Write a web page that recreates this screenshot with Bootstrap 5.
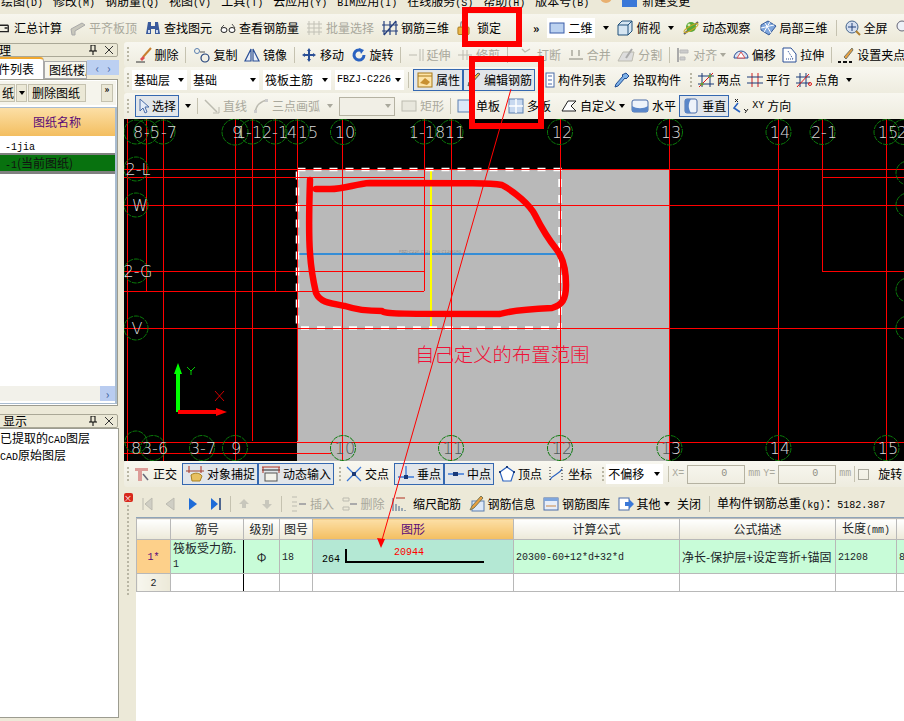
<!DOCTYPE html>
<html lang="zh">
<head>
  <meta charset="UTF-8" />
  <title>钢筋算量</title>
  <link href="https://cdn.jsdelivr.net/npm/bootstrap@5.3.3/dist/css/bootstrap.min.css" rel="stylesheet">
  <style>
    html, body { height: 721px; margin: 0; overflow: hidden; }
    body { position: relative; background: #ece9d8; color: #000; font: 12px/16px "Noto Sans CJK SC", sans-serif; }
    .mono { font-family: "Liberation Mono", monospace; font-size: 10px; }
    svg { flex: none; display: block; }

    /* menu + toolbars */
    .menu-row { height: 14px; overflow: hidden; line-height: 1px; gap: 10px; padding-left: 1px; background: #ece9d8; white-space: nowrap; }
    .menu-row svg { margin-top: -7px; }
    .menu-near { margin-left: -5px; }
    .menu-icon-near { margin-left: -2px; }
    .tool-row { height: 28px; gap: 8px; background: linear-gradient(#f7f6ee, #ece9d8); white-space: nowrap; overflow: hidden; }
    .tbar { background: linear-gradient(#f8f7f0, #eeecdf); white-space: nowrap; overflow: hidden; margin-left: 4px; border-radius: 3px 0 0 3px; }
    .tbar-a { height: 25px; gap: 6.5px; }
    .tbar-b { height: 26px; gap: 6px; }
    .tbar-c { height: 26px; gap: 6px; }
    .tbar-s { height: 26px; gap: 5px; }
    .tool { display: flex; align-items: center; gap: 3px; flex: none; }
    .off { color: #a9a89c; }
    .grip { width: 2px; height: 15px; margin-left: 3px; flex: none; background: repeating-linear-gradient(#b9b6a4 0 2px, transparent 2px 4px); }
    .grip-flush { margin-left: 0; }
    .sep { width: 1px; height: 16px; background: #c5c2b0; flex: none; }
    .sep-tight { margin: 0 -2px; }
    .tri { width: 0; height: 0; flex: none; border: 3px solid transparent; border-top: 4px solid #000; border-bottom: 0; }
    .tri-off { border-top-color: #a9a89c; }
    .active-btn { height: 22px; padding: 0 2px 0 3px; border: 1px solid #3568b0; background: #e2e6ea; gap: 3px; }
    .combo { background: #fff; height: 20px; align-items: center; justify-content: space-between; display: flex; padding: 0 3px 0 2px; flex: none; overflow: hidden; }
    .combo-a { width: 55px; }
    .combo-b { width: 68px; }
    .combo-c { width: 69px; }
    .combo-off { width: 56px; height: 19px; border: 1px solid #b5b2a2; background: #f1efe6; }
    .combo-off2 { width: 57px; }
    .combos { gap: 4px; margin-left: -3px; }
    .offset-group { gap: 3px; }
    .num-box { width: 58px; height: 19px; border: 1px solid #b5b2a2; color: #8f8e84; display: flex; align-items: center; justify-content: flex-end; padding-right: 17px; flex: none; }
    .check-off { width: 11px; height: 11px; border: 1px solid #a9a89c; flex: none; margin-right: 6px; }
    .push-r { margin-right: 2px; }
    .push-l { margin-left: 2px; }
    .pull-l { margin-left: -3px; }

    /* left docking panels */
    .side { width: 120px; flex: none; overflow: hidden; height: 679px; }
    .dock-title { height: 14px; margin: 1px 2px 0 -2px; border: 1px solid #aaa897; border-radius: 2px; background: #ebe8d6; line-height: 12px; overflow: hidden; padding: 0 4px 0 0; }
    .tab-strip { height: 22px; white-space: nowrap; overflow: hidden; position: relative; }
    .tab-on { width: 44px; height: 22px; background: #fff; border-top: 2px solid #f0a830; border-right: 1px solid #aaa; border-radius: 0 4px 0 0; padding-top: 2px; text-indent: -2px; overflow: hidden; flex: none; }
    .tab-off { width: 43px; height: 18px; margin-top: 4px; background: #f7f6ee; border: 1px solid #aaa; overflow: hidden; padding-left: 4px; flex: none; }
    .tab-nav { position: absolute; left: 87px; top: 3px; width: 32px; height: 15px; background: #bcd0f2; gap: 8px; justify-content: center; align-items: center; display: flex; color: #4a6ca8; }
    .tab-box { height: 327px; width: 121px; margin-left: -3px; background: #fff; border: 1px solid #9c9c90; padding: 1px 0 0; position: relative; }
    .mini-row { height: 24px; background: #f5f4ec; gap: 1px; padding-top: 3px; overflow: hidden; margin-right: 1px; }
    .mini-btn { height: 18px; background: #ebe8d6; border: 1px solid #c5c2b0; display: flex; align-items: center; flex: none; overflow: hidden; }
    .mini-a { width: 17px; justify-content: flex-end; }
    .mini-b { width: 11px; justify-content: center; }
    .mini-c { width: 58px; padding-left: 3px; }
    .mini-d { width: 12px; margin-left: 14px; font-size: 9px; line-height: 10px; font-weight: 700; justify-content: center; align-items: flex-start; }
    .sheet { border: 1px solid #a9bcd0; border-right-width: 2px; height: 297px; margin: 2px 0 0; position: relative; }
    .sheet-head { height: 28px; background: linear-gradient(#fcdfa6, #f3be60); color: #5a0a78; text-align: center; line-height: 28px; }
    .sheet-row { height: 17px; padding-left: 6px; line-height: 17px; }
    .sheet-cur { height: 16px; background: #08720f; color: #111; padding-left: 6px; line-height: 16px; border-top: 2px solid #808080; border-bottom: 3px solid #808080; box-sizing: content-box; }
    .sheet-scroll { position: absolute; left: 0; right: 0; bottom: 2px; height: 15px; background: #f2f1ea; display: flex; justify-content: flex-end; }
    .scroll-btn { width: 15px; height: 15px; background: #b9ccf0; color: #3e5f9c; display: flex; align-items: center; justify-content: center; }
    .layer-box { height: 290px; background: #fff; width: 122px; margin-left: -3px; border: 1px solid #9c9c90; padding: 2px 0 0 2px; white-space: nowrap; overflow: hidden; line-height: 14px; }

    .work { flex: 1; min-width: 0; }
    .cad { display: block; margin-left: 4px; background: #000; }
    .cad text { font-family: "DejaVu Sans", sans-serif; font-size: 16px; font-weight: 300; fill: #dcdcdc; text-anchor: middle; }
    .cad .dim { fill: #4d5a5a; }
    .cad .note { font-family: "Noto Sans CJK SC", sans-serif; font-size: 19.4px; fill: #f01038; text-anchor: start; }
    .cad .tiny { font-size: 4px; fill: #666; }

    /* rebar panel */
    .rebar-panel { height: 234px; }
    .rebar-strip { width: 16px; flex: none; padding-top: 6px; align-items: center; gap: 3px; }
    .close-red { width: 9px; height: 9px; background: #d8281c; color: #fff; border-radius: 2px; font-size: 8px; line-height: 9px; text-align: center; }
    .strip-dots { width: 2px; height: 90px; background: repeating-linear-gradient(#b9b6a4 0 2px, transparent 2px 4px); }
    .rebar-main { flex: 1; min-width: 0; background: #fff; }
    .rebar-tools { height: 31px; padding: 4px 0 0 5px; background: #ece9d8; gap: 7.5px; white-space: nowrap; overflow: hidden; border-bottom: 1px solid #8ea4b8; }
    .nav-group { gap: 11px; }
    .rebar-table { table-layout: fixed; width: 800px; margin: 0; border-color: #b8b8b8; font-size: 12px; --bs-table-bg: transparent; }
    .rebar-table th, .rebar-table td { padding: 0 2px; border: 1px solid #b8b8b8; height: 18px; vertical-align: middle; font-weight: 400; line-height: 14px; white-space: nowrap; overflow: hidden; }
    .rebar-table th { background: linear-gradient(#fff, #ece9d8); text-align: center; height: 21px; }
    .rebar-table th.col-on { background: linear-gradient(#fcdfa6, #f3be60); color: #5a0a78; }
    .rebar-table .row-a td { background: #c8fcd8; height: 34px; }
    .rebar-table .row-a td.shape { background: #b4e8d4; padding: 0; }
    .rebar-table td.rownum { text-align: center; background: linear-gradient(90deg, #f7f6ee, #ece9d8); }
    .rebar-table .row-a td.rownum { background: #fdd08a; color: #5a0a78; }
    .rebar-table td.wrap { white-space: normal; }
    .rebar-table td.rule-right { border-right: 1px solid #000; }
    .c0 { width: 34px; } .c1 { width: 73px; } .c2 { width: 36px; } .c3 { width: 33px; } .c4 { width: 201px; }
    .c5 { width: 166px; } .c6 { width: 156px; } .c7 { width: 61px; } .c8 { width: 40px; }

    /* marks drawn on top of the screenshot */
    .ink { position: absolute; left: 0; top: 0; pointer-events: none; }
  </style>
</head>
<body>

<!-- icon sprite -->
<svg width="0" height="0" class="position-absolute">
  <defs>
    <symbol id="i-sum" viewBox="0 0 12 16"><path d="M0 5h9M9 5v7H0M5 8h3" fill="none" stroke="#222" stroke-width="1.5"/></symbol>
    <symbol id="i-level" viewBox="0 0 16 16"><path d="M1 9l11-6 3 2-10 6v4H2z" fill="#c8c7bc" stroke="#aaa" /></symbol>
    <symbol id="i-binoc" viewBox="0 0 16 16"><path d="M3 2h3v4h4V2h3l2 12h-5V9H6v5H1z" fill="#3a5a9c"/><path d="M3 10h2v3H3zM11 10h2v3h-2z" fill="#cfdcf2"/></symbol>
    <symbol id="i-glass" viewBox="0 0 16 16"><path d="M1 8l3-3M15 8l-3-4" stroke="#555" fill="none"/><ellipse cx="4" cy="10" rx="3" ry="2.5" fill="#fff" stroke="#222"/><ellipse cx="12" cy="10" rx="3" ry="2.5" fill="#fff" stroke="#222"/></symbol>
    <symbol id="i-batch" viewBox="0 0 16 16"><path d="M2 1v14M7 1v14M12 1v14M0 4h15M0 8h15M0 12h15" stroke="#c2c1b6" fill="none"/></symbol>
    <symbol id="i-r3d" viewBox="0 0 16 16"><path d="M2 1v14M8 1v14M14 1v14M0 5h16M0 11h16M2 15L14 1" stroke="#26407e" fill="none" stroke-width="1.2"/></symbol>
    <symbol id="i-lock" viewBox="0 0 14 16"><path d="M4 7V4a3 3 0 0 1 6 0v3" fill="none" stroke="#999" stroke-width="1.5"/><rect x="1" y="7" width="12" height="8" rx="1" fill="#eab64a" stroke="#a87818"/></symbol>
    <symbol id="i-2d" viewBox="0 0 16 16"><rect x="1" y="3" width="14" height="10" fill="#bcd2f0" stroke="#3a5ca8"/></symbol>
    <symbol id="i-cube" viewBox="0 0 16 16"><path d="M1 5l4-4h10v10l-4 4H1z" fill="#d6e6f2" stroke="#20507a"/><path d="M1 5h10v10M11 5l4-4" fill="none" stroke="#20507a"/></symbol>
    <symbol id="i-orbit" viewBox="0 0 18 16"><path d="M2 14L16 2" stroke="#666" stroke-width="2"/><circle cx="9" cy="7" r="5" fill="#58a838"/><circle cx="7" cy="5" r="1.5" fill="#d4f0b8"/><ellipse cx="9" cy="8" rx="8" ry="2" fill="none" stroke="#c8a820" transform="rotate(-30 9 8)"/></symbol>
    <symbol id="i-local" viewBox="0 0 18 16"><path d="M2 5l7-4 8 5-7 9-8-5z" fill="#7fa6dc" stroke="#345a9a"/><path d="M6 3l6 10M11 2l-6 10M2 8l13-3" stroke="#fff" fill="none"/></symbol>
    <symbol id="i-full" viewBox="0 0 16 16"><circle cx="7" cy="7" r="6" fill="#d4dff0" stroke="#44648c"/><path d="M11 11l4 4" stroke="#b08030" stroke-width="2"/><path d="M7 3v8M3 7h8" stroke="#20407a"/></symbol>
    <symbol id="i-zoom" viewBox="0 0 16 16"><circle cx="6" cy="6" r="5" fill="#eef2f8" stroke="#667"/><path d="M10 10l5 5" stroke="#b08030" stroke-width="2"/></symbol>

    <symbol id="i-brush" viewBox="0 0 16 16"><path d="M15 1L7 10" stroke="#c88030" stroke-width="2"/><path d="M7 9l-3 3 2 2 3-3z" fill="#e05050"/><path d="M0 15h9" stroke="#333"/></symbol>
    <symbol id="i-copy" viewBox="0 0 18 16"><circle cx="4" cy="4" r="2.5" fill="none" stroke="#5a7fb0"/><circle cx="12" cy="11" r="4" fill="none" stroke="#20407a" stroke-width="1.2"/><path d="M7 5h5" stroke="#555"/></symbol>
    <symbol id="i-mirror" viewBox="0 0 16 16"><path d="M7 2L1 14h6zM9 2l6 12H9z" fill="#e8eef8" stroke="#2a4f96" stroke-width="1.2"/></symbol>
    <symbol id="i-move" viewBox="0 0 16 16"><path d="M8 1l2 3H9v3h3V6l3 2-3 2V9H9v3h1l-2 3-2-3h1V9H4v1L1 8l3-2v1h3V4H6z" fill="#2a4f96"/></symbol>
    <symbol id="i-rot" viewBox="0 0 16 16"><path d="M13 8a5 5 0 1 1-3-4.6" fill="none" stroke="#2a62c0" stroke-width="3"/><path d="M8 1l5 2-3 4z" fill="#2a62c0"/></symbol>
    <symbol id="i-extend" viewBox="0 0 16 16"><path d="M1 8h8M12 2v12M15 2v12" stroke="#bcbbb0" fill="none"/></symbol>
    <symbol id="i-trim" viewBox="0 0 16 16"><path d="M1 8h14M6 3v10M10 3v10" stroke="#bcbbb0" fill="none"/></symbol>
    <symbol id="i-break" viewBox="0 0 20 16"><path d="M1 12h7M12 12h7M8 2l3 3 5-3" stroke="#bcbbb0" fill="none" stroke-width="1.3"/></symbol>
    <symbol id="i-merge" viewBox="0 0 16 16"><path d="M1 12h14M4 3v6M11 3v6" stroke="#bcbbb0" fill="none" stroke-width="2"/></symbol>
    <symbol id="i-split" viewBox="0 0 18 16"><path d="M1 14h14l2-9H6z" fill="#ddd" stroke="#bcbbb0"/><path d="M9 11l6-9" stroke="#aaa" stroke-width="2"/></symbol>
    <symbol id="i-align" viewBox="0 0 14 16"><path d="M2 1v14" stroke="#aaa" stroke-width="2"/><path d="M4 3h8v3H4zM4 10h5v3H4z" fill="#ccc" stroke="#bbb"/></symbol>
    <symbol id="i-offset" viewBox="0 0 16 16"><path d="M1 11a7 7 0 1 1 14 0z" fill="#d8e4f4" stroke="#2a4f96"/><path d="M4 11l4-6 4 6z" fill="#fff" stroke="#d85050"/></symbol>
    <symbol id="i-stretch" viewBox="0 0 15 16"><path d="M1 1h8l5 6v8H1z" fill="#fff" stroke="#2a4f96"/><path d="M6 4l5 8M4 12h8" stroke="#2a4f96" stroke-dasharray="1 1" fill="none"/></symbol>
    <symbol id="i-grips" viewBox="0 0 16 16"><path d="M14 1l-8 9 2 2 7-9z" fill="#e8a040" stroke="#776"/><path d="M0 15h3M5 15h4M11 15h3" stroke="#111" stroke-width="2"/></symbol>

    <symbol id="i-prop" viewBox="0 0 16 16"><rect x="1" y="1" width="14" height="14" fill="#fde4a8" stroke="#a87818"/><path d="M3 11l5-5 5 4-3 3z" fill="#c89030"/><path d="M1 4h14" stroke="#a87818"/></symbol>
    <symbol id="i-pencil" viewBox="0 0 14 16"><path d="M13 2l-9 10-3 2 1-4 9-9z" fill="#f0c040" stroke="#555"/></symbol>
    <symbol id="i-list" viewBox="0 0 14 16"><rect x="5" y="1" width="8" height="14" fill="#fff" stroke="#4a6ca8"/><path d="M1 3h2M1 7h2M1 11h2M7 4h4M7 8h4M7 12h4" stroke="#4a6ca8"/></symbol>
    <symbol id="i-drop" viewBox="0 0 16 16"><path d="M12 1l3 3-3 3-1-1-7 8-3 1 1-3 7-8-1-1z" fill="#7fb2e8" stroke="#1f4c92"/></symbol>
    <symbol id="i-2p" viewBox="0 0 16 16"><path d="M4 1v14M12 1v14M0 4h16M0 12h16" stroke="#1a3a78" fill="none"/><path d="M1 15L15 1" stroke="#e01818"/><circle cx="4" cy="12" r="1.6" fill="#6a9a30"/><circle cx="12" cy="4" r="1.6" fill="#6a9a30"/></symbol>
    <symbol id="i-par" viewBox="0 0 16 16"><path d="M5 1v14M11 1v14" stroke="#d02020"/><path d="M0 5h16M0 11h16" stroke="#1a3a78"/></symbol>
    <symbol id="i-ang" viewBox="0 0 16 16"><path d="M4 1v14M10 1v14M0 5h14M0 11h14" stroke="#1a3a78" fill="none"/><path d="M1 15L13 2" stroke="#e01818"/><circle cx="14" cy="12" r="1.5" fill="none" stroke="#e01818"/></symbol>

    <symbol id="i-arrow" viewBox="0 0 10 16"><path d="M1 1v12l3-3 2 5 2-1-2-5h4z" fill="#e4ecf8" stroke="#4a6ca8"/></symbol>
    <symbol id="i-line" viewBox="0 0 16 16"><path d="M1 2l12 12" stroke="#bcbbb0" stroke-width="1.5"/><path d="M9 15h6V9" fill="none" stroke="#bcbbb0"/></symbol>
    <symbol id="i-arc" viewBox="0 0 16 16"><path d="M2 15C3 7 7 3 15 2" fill="none" stroke="#bcbbb0" stroke-width="1.5"/><rect x="1" y="12" width="3" height="3" fill="#ccc"/><rect x="12" y="1" width="3" height="3" fill="#ccc"/></symbol>
    <symbol id="i-rect" viewBox="0 0 16 16"><rect x="1" y="3" width="14" height="10" fill="#e8e7dd" stroke="#bcbbb0"/></symbol>
    <symbol id="i-plate" viewBox="0 0 16 16"><rect x="1" y="2" width="14" height="12" fill="#dce8f8" stroke="#5a7fb0"/></symbol>
    <symbol id="i-multi" viewBox="0 0 16 16"><rect x="1" y="1" width="14" height="14" fill="#c8d9f0" stroke="#5a7fb0"/><path d="M8 1v14M1 8h14" stroke="#fff" stroke-width="1.5"/></symbol>
    <symbol id="i-custom" viewBox="0 0 16 16"><path d="M1 13L7 3h8L10 8l5 5z" fill="#fff" stroke="#222"/></symbol>
    <symbol id="i-hor" viewBox="0 0 18 16"><rect x="1" y="2" width="16" height="12" rx="2" fill="#eef3fa" stroke="#4a6ca8"/><path d="M1 8c5 3 11 3 16 0v6H1z" fill="#5a86c8"/></symbol>
    <symbol id="i-ver" viewBox="0 0 16 16"><rect x="2" y="1" width="12" height="14" rx="2" fill="#eef3fa" stroke="#4a6ca8"/><path d="M8 1C5 6 5 10 8 15H2V1z" fill="#5a86c8"/></symbol>
    <symbol id="i-xy" viewBox="0 0 17 16"><path d="M6 5l-4 5 6 4" fill="none" stroke="#2a62c0" stroke-width="1.6"/><path d="M3 1l3 3M6 1L3 4M12 11l2 2M16 11l-3 4" stroke="#222" fill="none"/></symbol>

    <symbol id="i-ortho" viewBox="0 0 16 16"><path d="M1 2h13v3H8v10H4V5H1z" fill="#dc9c98"/><path d="M9 8l5 6" stroke="#667" stroke-width="1.5"/></symbol>
    <symbol id="i-snap" viewBox="0 0 18 16"><path d="M3 0v7M15 0v7" stroke="#b03020"/><path d="M0 5h18" stroke="#a04030"/><path d="M5 9c4-3 9-2 11 1l-2 5H6z" fill="#e8c060" stroke="#a88020"/></symbol>
    <symbol id="i-dyn" viewBox="0 0 18 16"><path d="M0 1h18" stroke="#b03020"/><path d="M0 4h18" stroke="#222"/><path d="M1 1v6M17 1v6" stroke="#b03020"/><rect x="3" y="7" width="12" height="8" fill="#f3f2ea" stroke="#555"/></symbol>
    <symbol id="i-cross" viewBox="0 0 16 16"><path d="M1 1l14 14M15 1L1 15" stroke="#3a78d8" stroke-width="1.3"/><rect x="6" y="6" width="4" height="4" fill="#1a3a78"/></symbol>
    <symbol id="i-perp" viewBox="0 0 16 16"><path d="M8 0v11M0 11h16" stroke="#3a78d8" stroke-width="1.3"/><rect x="6" y="9" width="4" height="4" fill="#1a3a78"/></symbol>
    <symbol id="i-mid" viewBox="0 0 16 16"><path d="M0 8h16" stroke="#3a78d8" stroke-width="1.3"/><rect x="5" y="6" width="5" height="4" fill="#1a3a78"/></symbol>
    <symbol id="i-vertex" viewBox="0 0 16 16"><path d="M8 1l7 5-3 9H4L1 6z" fill="#fff" stroke="#2a62c0" stroke-width="1.2"/><rect x="7" y="0" width="2" height="2" fill="#1a3a78"/><rect x="0" y="5" width="2" height="2" fill="#1a3a78"/><rect x="14" y="5" width="2" height="2" fill="#1a3a78"/></symbol>
    <symbol id="i-coord" viewBox="0 0 18 16"><path d="M3 14C6 8 12 9 15 3" fill="none" stroke="#2a62c0" stroke-width="1.3"/><path d="M3 1v14M15 1v14" stroke="#222" stroke-dasharray="1 2"/></symbol>

    <symbol id="i-first" viewBox="0 0 12 16"><path d="M2 2v12M11 2L4 8l7 6z" fill="#cfcec4" stroke="#bcbbb0"/></symbol>
    <symbol id="i-prev" viewBox="0 0 12 16"><path d="M10 2L2 8l8 6z" fill="#cfcec4" stroke="#bcbbb0"/></symbol>
    <symbol id="i-next" viewBox="0 0 12 16"><path d="M2 2l8 6-8 6z" fill="#1e6cd8"/></symbol>
    <symbol id="i-last" viewBox="0 0 12 16"><path d="M1 2l7 6-7 6z" fill="#1e6cd8"/><path d="M10 2v12" stroke="#1a3a78" stroke-width="1.5"/></symbol>
    <symbol id="i-up" viewBox="0 0 12 16"><path d="M6 3l5 5H8v4H4V8H1z" fill="#c8c7bc"/></symbol>
    <symbol id="i-down" viewBox="0 0 12 16"><path d="M6 13l5-5H8V4H4v4H1z" fill="#c8c7bc"/></symbol>
    <symbol id="i-ins" viewBox="0 0 16 16"><path d="M1 1h5M1 15h5M1 6h5M1 10h5" stroke="#bcbbb0"/><path d="M8 8h7" stroke="#aaa" stroke-width="2"/></symbol>
    <symbol id="i-del" viewBox="0 0 16 16"><path d="M1 2h6v3H1zM1 11h6v3H1z" fill="none" stroke="#bcbbb0"/><path d="M8 8h7" stroke="#aaa" stroke-width="2"/></symbol>
    <symbol id="i-scale" viewBox="0 0 14 16"><path d="M1 15V2M4 15V8M7 15v-5M10 15v-3M13 15v-1" stroke="#44648c"/><path d="M4 2h9" stroke="#b03020"/></symbol>
    <symbol id="i-info" viewBox="0 0 16 16"><rect x="3" y="5" width="12" height="10" fill="#dce8f8" stroke="#5a7fb0"/><path d="M12 0L3 10l-2 4 4-2 9-10z" fill="#e8a040" stroke="#775"/></symbol>
    <symbol id="i-lib" viewBox="0 0 16 16"><rect x="1" y="2" width="14" height="12" fill="#e8eef8" stroke="#4a6ca8"/><path d="M1 2h14v3H1z" fill="#7fa6dc"/><path d="M3 10h10" stroke="#c84"/></symbol>
    <symbol id="i-other" viewBox="0 0 16 16"><rect x="1" y="2" width="10" height="12" fill="#fff" stroke="#4a6ca8"/><path d="M7 6h4V3l5 5-5 5v-3H7z" fill="#3a78d8"/></symbol>
  </defs>
</svg>

<!-- menu -->
<div class="menu-row d-flex">
  <span>绘图<span class="mono">(D)</span></span><span>修改<span class="mono">(M)</span></span><span>钢筋量<span class="mono">(Q)</span></span><span>视图<span class="mono">(V)</span></span><span>工具<span class="mono">(T)</span></span><span>云应用<span class="mono">(Y)</span></span><span><span class="mono">BIM</span>应用<span class="mono">(I)</span></span><span>在线服务<span class="mono">(S)</span></span><span>帮助<span class="mono">(H)</span></span><span>版本号<span class="mono">(B)</span></span>
  <svg width="15" height="14" viewBox="0 0 15 14"><circle cx="7" cy="4" r="6" fill="#e8b070"/><path d="M1 0h13" stroke="#d8a820" stroke-width="3"/></svg>
  <svg class="menu-icon-near" width="15" height="14" viewBox="0 0 15 14"><rect width="15" height="14" fill="#3a78d8"/></svg>
  <span class="menu-near">新建变更</span>
</div>

<!-- main toolbar -->
<div class="tool-row d-flex align-items-center">
  <span class="tool"><svg width="11" height="16"><use href="#i-sum"/></svg>汇总计算</span>
  <span class="tool off"><svg width="16" height="16"><use href="#i-level"/></svg>平齐板顶</span>
  <span class="tool"><svg width="16" height="16"><use href="#i-binoc"/></svg>查找图元</span>
  <span class="tool"><svg width="16" height="16"><use href="#i-glass"/></svg>查看钢筋量</span>
  <span class="tool off"><svg width="16" height="16"><use href="#i-batch"/></svg>批量选择</span>
  <span class="tool"><svg width="16" height="16"><use href="#i-r3d"/></svg>钢筋三维</span>
  <span class="tool"><svg width="13" height="16"><use href="#i-lock"/></svg><span class="ms-1">锁定</span></span>
  <span class="fw-bold ms-4">»</span>
  <span class="combo"><span class="tool"><svg width="16" height="16"><use href="#i-2d"/></svg>二维</span></span><span class="tri"></span>
  <span class="tool"><svg width="16" height="16"><use href="#i-cube"/></svg>俯视<span class="tri ms-1"></span></span>
  <span class="tool"><svg width="18" height="16"><use href="#i-orbit"/></svg>动态观察</span>
  <span class="tool"><svg width="18" height="16"><use href="#i-local"/></svg>局部三维</span>
  <span class="sep"></span>
  <span class="tool"><svg width="16" height="16"><use href="#i-full"/></svg>全屏</span>
  <span class="tool"><svg width="16" height="16"><use href="#i-zoom"/></svg></span>
</div>

<div class="d-flex">
  <!-- left docks -->
  <div class="side">
    <div class="dock-title d-flex justify-content-between">
      <span>理</span>
      <span class="d-flex gap-2 align-items-center"><svg width="8" height="10" viewBox="0 0 8 10"><path d="M2 0v6M6 0v6M0 6h8M4 6v4M2 0h4" stroke="#000" fill="none"/></svg><svg width="8" height="8" viewBox="0 0 8 8"><path d="M0 0l8 8M8 0L0 8" stroke="#333"/></svg></span>
    </div>
    <div class="tab-strip d-flex">
      <div class="tab-on">件列表</div>
      <div class="tab-off">图纸楼层</div>
      <div class="tab-nav"><span>‹</span><span>›</span></div>
    </div>
    <div class="tab-box">
      <div class="mini-row d-flex">
        <span class="mini-btn mini-a">纸</span>
        <span class="mini-btn mini-b"><span class="tri"></span></span>
        <span class="mini-btn mini-c">删除图纸</span>
        <span class="mini-btn mini-d">»</span>
      </div>
      <div class="sheet">
        <div class="sheet-head">图纸名称</div>
        <div class="sheet-row"><span class="mono">-1jia</span></div>
        <div class="sheet-cur"><span class="mono">-1</span>(当前图纸)</div>
        <div class="sheet-scroll"><span class="scroll-btn">›</span></div>
      </div>
    </div>
    <div class="dock-title d-flex justify-content-between mt-2">
      <span class="ps-1">显示</span>
      <span class="d-flex gap-2 align-items-center"><svg width="8" height="10" viewBox="0 0 8 10"><path d="M2 0v6M6 0v6M0 6h8M4 6v4M2 0h4" stroke="#000" fill="none"/></svg><svg width="8" height="8" viewBox="0 0 8 8"><path d="M0 0l8 8M8 0L0 8" stroke="#333"/></svg></span>
    </div>
    <div class="layer-box">
      <div>已提取的<span class="mono">CAD</span>图层</div>
      <div><span class="mono">CAD</span>原始图层</div>
    </div>
  </div>

  <!-- work area -->
  <div class="work">
    <div class="tbar tbar-a d-flex align-items-center">
      <span class="grip"></span>
      <span class="tool"><svg width="16" height="16"><use href="#i-brush"/></svg>删除</span><span class="sep"></span>
      <span class="tool"><svg width="18" height="16"><use href="#i-copy"/></svg>复制</span>
      <span class="tool"><svg width="16" height="16"><use href="#i-mirror"/></svg>镜像</span><span class="sep"></span>
      <span class="tool"><svg width="16" height="16"><use href="#i-move"/></svg>移动</span>
      <span class="tool"><svg width="16" height="16"><use href="#i-rot"/></svg>旋转</span><span class="sep"></span>
      <span class="tool off"><svg width="16" height="16"><use href="#i-extend"/></svg>延伸</span>
      <span class="tool off"><svg width="16" height="16"><use href="#i-trim"/></svg>修剪</span><span class="sep"></span>
      <span class="tool off"><svg width="20" height="16"><use href="#i-break"/></svg>打断</span>
      <span class="tool off"><svg width="16" height="16"><use href="#i-merge"/></svg>合并</span>
      <span class="tool off"><svg width="18" height="16"><use href="#i-split"/></svg>分割</span><span class="sep"></span>
      <span class="tool off"><svg width="14" height="16"><use href="#i-align"/></svg>对齐<span class="tri tri-off"></span></span>
      <span class="tool"><svg width="16" height="16"><use href="#i-offset"/></svg>偏移</span>
      <span class="tool"><svg width="15" height="16"><use href="#i-stretch"/></svg>拉伸</span><span class="sep"></span>
      <span class="tool"><svg width="16" height="16"><use href="#i-grips"/></svg>设置夹点</span>
    </div>

    <div class="tbar tbar-b d-flex align-items-center">
      <span class="grip"></span>
      <span class="d-flex combos">
        <span class="combo combo-a">基础层<span class="tri"></span></span>
        <span class="combo combo-b">基础<span class="tri"></span></span>
        <span class="combo combo-b">筏板主筋<span class="tri"></span></span>
        <span class="combo combo-c"><span class="mono">FBZJ-C226</span><span class="tri"></span></span>
      </span>
      <span class="sep sep-tight"></span>
      <span class="d-flex">
        <span class="tool active-btn"><svg width="16" height="16"><use href="#i-prop"/></svg>属性</span>
        <span class="tool active-btn"><svg width="14" height="16"><use href="#i-pencil"/></svg>编辑钢筋</span>
      </span>
      <span class="tool"><svg width="14" height="16"><use href="#i-list"/></svg>构件列表</span>
      <span class="tool push-l"><svg width="16" height="16"><use href="#i-drop"/></svg>拾取构件</span>
      <span class="grip"></span>
      <span class="tool"><svg width="16" height="16"><use href="#i-2p"/></svg>两点</span>
      <span class="tool"><svg width="16" height="16"><use href="#i-par"/></svg>平行</span>
      <span class="tool"><svg width="16" height="16"><use href="#i-ang"/></svg>点角<span class="tri ms-1"></span></span>
    </div>

    <div class="tbar tbar-c d-flex align-items-center">
      <span class="grip"></span>
      <span class="tool active-btn"><svg width="10" height="16"><use href="#i-arrow"/></svg>选择</span><span class="tri"></span><span class="sep"></span>
      <span class="tool off"><svg width="16" height="16"><use href="#i-line"/></svg>直线</span>
      <span class="tool off"><svg width="16" height="16"><use href="#i-arc"/></svg>三点画弧<span class="tri tri-off ms-1"></span></span>
      <span class="combo combo-off justify-content-end"><span class="tri tri-off"></span></span>
      <span class="tool off"><svg width="16" height="16"><use href="#i-rect"/></svg>矩形</span><span class="sep"></span>
      <span class="tool"><svg width="16" height="16"><use href="#i-plate"/></svg>单板</span>
      <span class="tool push-l"><svg width="16" height="16"><use href="#i-multi"/></svg>多板</span>
      <span class="tool ms-1"><svg width="16" height="16"><use href="#i-custom"/></svg>自定义<span class="tri"></span></span>
      <span class="tool"><svg width="18" height="16"><use href="#i-hor"/></svg>水平</span>
      <span class="tool active-btn pull-l"><svg width="16" height="16"><use href="#i-ver"/></svg>垂直</span>
      <span class="tool pull-l"><svg width="17" height="16"><use href="#i-xy"/></svg><span class="mono">XY</span>方向</span>
    </div>

    <!-- drawing canvas -->
    <svg class="cad" width="780" height="342" viewBox="124 119 780 342">
      <rect x="297" y="169" width="372" height="292" fill="#b9b9b9"/>
      <path d="M297 254H560" stroke="#0a7fe0" stroke-width="1.6"/>
      <text class="tiny" x="430" y="253">FBZJ-C226 C12@180 C12@180</text>
      <path d="M431 169V328" stroke="#ff0" stroke-width="2"/>
      <path d="M297.5 169.5H560V328H297.5Z" fill="none" stroke="#fff" stroke-width="3.5" stroke-dasharray="8 8"/>
      <g stroke="#f00" stroke-width="1" fill="none" shape-rendering="crispEdges">
        <path d="M127 119V461M163 119V461M235 119V461M342.5 119V461M451 119V461M560 119V461M669.5 119V461M778.5 119V461M886.5 119V461"/>
        <path d="M146 119V292M252 119V441M275 119V291M297 119V441M424 119V291M822.5 119V271"/>
        <path d="M124 169H904M124 205H904M124 328H904M124 442H904"/>
        <path d="M124 177H424M822 177H904M124 271H424M822 271H904M124 291H424M124 453H331"/>
      </g>
      <g fill="none" stroke="#0a7a0a" stroke-width="1" stroke-dasharray="5 1">
        <circle cx="136" cy="132" r="12"/><circle cx="146" cy="132" r="12"/><circle cx="163" cy="132" r="12"/>
        <circle cx="235" cy="132" r="13"/><circle cx="252" cy="132" r="12"/><circle cx="275" cy="132" r="12"/><circle cx="297" cy="132" r="12"/>
        <circle cx="343" cy="132" r="12.5"/><circle cx="424" cy="132" r="12"/><circle cx="451" cy="132" r="12"/><circle cx="560" cy="132" r="12.5"/>
        <circle cx="669.5" cy="132" r="13"/><circle cx="778.5" cy="132" r="12.5"/><circle cx="822.5" cy="132" r="12.5"/><circle cx="886.5" cy="132" r="12.5"/><circle cx="904" cy="132" r="12.5"/>
        <circle cx="136" cy="169" r="12"/><circle cx="136" cy="205" r="12"/><circle cx="136" cy="271" r="12"/><circle cx="136" cy="328" r="12"/>
        <circle cx="136" cy="442" r="11"/><circle cx="153" cy="448" r="12.5"/><circle cx="202" cy="448" r="12.5"/><circle cx="235" cy="448" r="12.5"/>
        <circle cx="343" cy="448" r="12.5"/><circle cx="451" cy="448" r="12.5"/><circle cx="560" cy="448" r="12.5"/><circle cx="669.5" cy="448" r="12.5"/><circle cx="778.5" cy="448" r="12.5"/><circle cx="886.5" cy="448" r="12.5"/>
        <circle cx="908" cy="173" r="12"/><circle cx="908" cy="205" r="12"/><circle cx="908" cy="290" r="12"/><circle cx="908" cy="328" r="12"/>
      </g>
      <text x="138" y="138">8</text><text x="152" y="138">-5</text><text x="169" y="138">-7</text>
      <text x="237" y="138">9</text><text x="249" y="138">1-1</text><text x="275" y="138">2-1</text><text x="292" y="138">4</text><text x="308" y="138">15</text>
      <text x="345" y="138">10</text><text x="427" y="138">1-18</text><text x="455" y="138">11</text><text x="562" y="138">12</text>
      <text x="671" y="138">13</text><text x="780" y="138">14</text><text x="824" y="138">2-1</text><text x="888" y="138">15</text><text x="902" y="138">2</text>
      <text x="138" y="175">2-L</text><text x="140" y="211">W</text><text x="138" y="277">2-G</text><text x="137" y="334">V</text>
      <text x="136" y="454">8</text><text x="155" y="454">3-6</text><text x="203" y="454">3-7</text><text x="236" y="454">9</text>
      <text class="dim" x="345" y="454">10</text><text class="dim" x="453" y="454">11</text><text class="dim" x="562" y="454">12</text>
      <text class="dim" x="666" y="454">1</text><text x="676" y="454">3</text><text x="780" y="454">14</text><text x="888" y="454">15</text>
      <!-- axis marker -->
      <path d="M178 412V372" stroke="#0f0" stroke-width="4"/><path d="M178 363l4 11h-8z" fill="#0f0"/>
      <path d="M178 412H216" stroke="#f00" stroke-width="4"/><path d="M227 412l-11-4v8z" fill="#f00"/>
      <path d="M187 367l4 4 4-4M191 371v4" stroke="#0f0" fill="none" stroke-width=".8"/>
      <path d="M215 391l9 10M224 391l-9 10" stroke="#f00" stroke-width=".8"/>
      <text class="note" x="415" y="362">自己定义的布置范围</text>
      <!-- hand-drawn outline -->
      <path d="M310 180C309 210 309 240 310 253C311 270 313 280 316 293C320 302 328 303 345 306C360 311 372 311 382 311C385 314 400 314 500 314C510 311 530 309 552 308C562 305 566 300 566 285C566 270 563 258 557 250C545 235 540 225 535 215C530 205 515 192 502 185C490 183 480 183 370 183C355 184 345 189 330 189L316 189" fill="none" stroke="#f00" stroke-width="6.5" stroke-linecap="round" stroke-linejoin="round"/>
    </svg>

    <!-- snap bar -->
    <div class="tbar tbar-s d-flex align-items-center">
      <span class="grip"></span>
      <span class="tool"><svg width="16" height="16"><use href="#i-ortho"/></svg>正交</span>
      <span class="d-flex">
        <span class="tool active-btn"><svg width="18" height="16"><use href="#i-snap"/></svg>对象捕捉</span>
        <span class="tool active-btn"><svg width="18" height="16"><use href="#i-dyn"/></svg>动态输入</span>
      </span>
      <span class="grip grip-flush"></span>
      <span class="tool"><svg width="16" height="16"><use href="#i-cross"/></svg>交点</span>
      <span class="d-flex">
        <span class="tool active-btn"><svg width="16" height="16"><use href="#i-perp"/></svg>垂点</span>
        <span class="tool active-btn"><svg width="16" height="16"><use href="#i-mid"/></svg>中点</span>
      </span>
      <span class="tool"><svg width="16" height="16"><use href="#i-vertex"/></svg>顶点</span>
      <span class="tool push-r"><svg width="18" height="16"><use href="#i-coord"/></svg>坐标</span>
      <span class="grip"></span>
      <span class="combo combo-off2 pull-l">不偏移<span class="tri"></span></span>
      <span class="d-flex align-items-center offset-group">
        <span class="sep"></span>
        <span class="off mono">X=</span><span class="num-box mono">0</span><span class="off mono">mm</span>
        <span class="off mono">Y=</span><span class="num-box mono">0</span><span class="off mono">mm</span>
        <span class="sep"></span>
        <span class="check-off"></span>
        <span>旋转</span>
      </span>
    </div>

    <!-- rebar panel -->
    <div class="rebar-panel d-flex">
      <div class="rebar-strip d-flex flex-column">
        <span class="close-red">×</span>
        <span class="strip-dots"></span>
      </div>
      <div class="rebar-main">
        <div class="rebar-tools d-flex align-items-center">
          <span class="d-flex nav-group">
            <svg width="12" height="16"><use href="#i-first"/></svg>
            <svg width="12" height="16"><use href="#i-prev"/></svg>
            <svg width="12" height="16"><use href="#i-next"/></svg>
            <svg width="12" height="16"><use href="#i-last"/></svg>
          </span>
          <span class="sep"></span>
          <span class="d-flex nav-group">
            <svg width="12" height="16"><use href="#i-up"/></svg>
            <svg width="12" height="16"><use href="#i-down"/></svg>
          </span>
          <span class="sep"></span>
          <span class="tool off push-l"><svg width="16" height="16"><use href="#i-ins"/></svg>插入</span>
          <span class="tool off"><svg width="16" height="16"><use href="#i-del"/></svg>删除</span>
          <span class="tool"><svg width="14" height="16"><use href="#i-scale"/></svg><span class="ms-1">缩尺配筋</span></span>
          <span class="tool"><svg width="16" height="16"><use href="#i-info"/></svg>钢筋信息</span>
          <span class="tool"><svg width="16" height="16"><use href="#i-lib"/></svg>钢筋图库</span>
          <span class="tool"><svg width="16" height="16"><use href="#i-other"/></svg>其他<span class="tri"></span></span>
          <span>关闭</span>
          <span class="sep"></span>
          <span>单构件钢筋总重<span class="mono">(kg)</span>：<span class="mono">5182.387</span></span>
        </div>
        <table class="table rebar-table">
          <colgroup><col class="c0"><col class="c1"><col class="c2"><col class="c3"><col class="c4"><col class="c5"><col class="c6"><col class="c7"><col class="c8"></colgroup>
          <thead>
            <tr><th></th><th>筋号</th><th>级别</th><th>图号</th><th class="col-on">图形</th><th>计算公式</th><th>公式描述</th><th>长度<span class="mono">(mm)</span></th><th>根数</th></tr>
          </thead>
          <tbody>
            <tr class="row-a">
              <td class="rownum"><span class="mono">1*</span></td>
              <td class="wrap rule-right">筏板受力筋.<br><span class="mono">1</span></td>
              <td class="text-center">Φ</td>
              <td><span class="mono">18</span></td>
              <td class="shape">
                <svg width="200" height="33" viewBox="0 0 200 33">
                  <text x="9" y="22" font-family="Liberation Mono" font-size="10">264</text>
                  <text x="81" y="15" font-family="Liberation Mono" font-size="10" fill="#f00">20944</text>
                  <path d="M33 9V22H171" fill="none" stroke="#000" stroke-width="2"/>
                </svg>
              </td>
              <td><span class="mono">20300-60+12*d+32*d</span></td>
              <td>净长-保护层+设定弯折+锚固</td>
              <td><span class="mono">21208</span></td>
              <td><span class="mono">8</span></td>
            </tr>
            <tr>
              <td class="rownum"><span class="mono">2</span></td>
              <td class="rule-right"></td><td></td><td></td><td></td><td></td><td></td><td></td><td></td>
            </tr>
          </tbody>
        </table>
      </div>
    </div>
  </div>
</div>

<!-- red marks someone drew on the screenshot -->
<svg class="ink" width="904" height="721" viewBox="0 0 904 721">
  <rect x="465" y="10" width="54" height="34" fill="none" stroke="#f00" stroke-width="6"/>
  <rect x="472" y="59" width="69" height="67" fill="none" stroke="#f00" stroke-width="6"/>
  <path d="M511 89L382 540" stroke="#f00" stroke-width="1"/>
  <path d="M381 548l-4-10 8 1z" fill="#f00"/>
</svg>

</body>
</html>
